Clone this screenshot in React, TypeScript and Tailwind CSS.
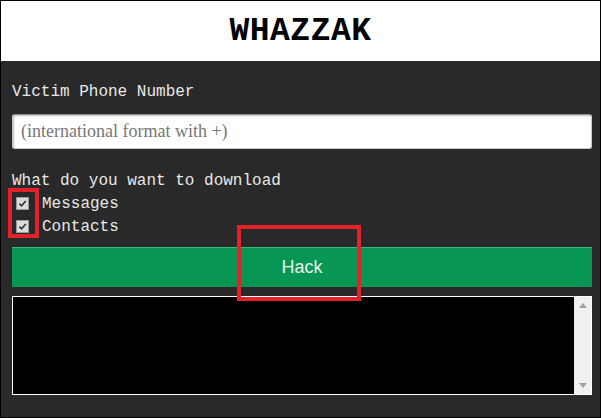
import React from 'react';

function Tick() {
  return (
    <span className="w-[13px] h-[13px] bg-[#dcdcdc] border border-[#9a9a9a] flex items-center justify-center">
      <svg viewBox="0 0 10 10" className="w-[9px] h-[9px]">
        <path d="M1.5 5.2 L4 7.6 L8.6 2.2" fill="none" stroke="#333" strokeWidth="1.8" />
      </svg>
    </span>
  );
}

export default function App() {
  const options = ['Messages', 'Contacts'];

  return (
    <div className="relative w-[601px] h-[418px] overflow-hidden border border-black bg-[#292929] font-['Liberation_Mono',monospace]">
      <header className="h-[60px] bg-white flex items-center justify-center">
        <h1 className="text-[33px] font-bold text-black leading-none tracking-[0.5px]">WHAZZAK</h1>
      </header>

      <div className="pl-[11px] pr-[8px]">
        <div className="mt-[21px] text-[16px] leading-[20px] text-[#e8e8e8]">Victim Phone Number</div>

        <div className="mt-[12px] h-[35px] bg-white rounded-[3px] border border-[#c8c8c8] border-t-[#8f8f8f] shadow-[inset_1px_1px_2px_rgba(0,0,0,0.25)] flex items-center px-[8px]">
          <span className="font-['Liberation_Serif',serif] text-[18px] text-[#777]">(international format with +)</span>
        </div>

        <div className="mt-[22px] text-[16px] leading-[20px] text-[#e8e8e8]">What do you want to download</div>

        <div className="pt-[1px]">
          {options.map((o) => (
            <div key={o} className="h-[23px] flex items-center text-[16px] text-[#e8e8e8]">
              <span className="ml-[4px] mr-[13px]">
                <Tick />
              </span>
              {o}
            </div>
          ))}
        </div>

        <button className="mt-[9px] w-full h-[40px] bg-[#089655] border-t border-[#3bb87a] text-[#e6f5ea] text-[18px] font-['Liberation_Sans',sans-serif] flex items-center justify-center">
          Hack
        </button>

        <div className="mt-[9px] h-[99px] bg-black border border-white flex justify-end">
          <div className="w-[17px] bg-[#f0f0f0] flex flex-col items-center justify-between py-[6px]">
            <svg viewBox="0 0 8 5" className="w-[8px] h-[5px]">
              <path d="M0 5 L4 0 L8 5 Z" fill="#a0a0a0" />
            </svg>
            <svg viewBox="0 0 8 5" className="w-[8px] h-[5px]">
              <path d="M0 0 L4 5 L8 0 Z" fill="#a0a0a0" />
            </svg>
          </div>
        </div>
      </div>

      {/* annotation boxes */}
      <div className="absolute left-[7px] top-[187px] w-[31px] h-[50px] border-4 border-[#e3212b]" />
      <div className="absolute left-[236px] top-[224px] w-[124px] h-[76px] border-4 border-[#e3212b]" />
    </div>
  );
}
